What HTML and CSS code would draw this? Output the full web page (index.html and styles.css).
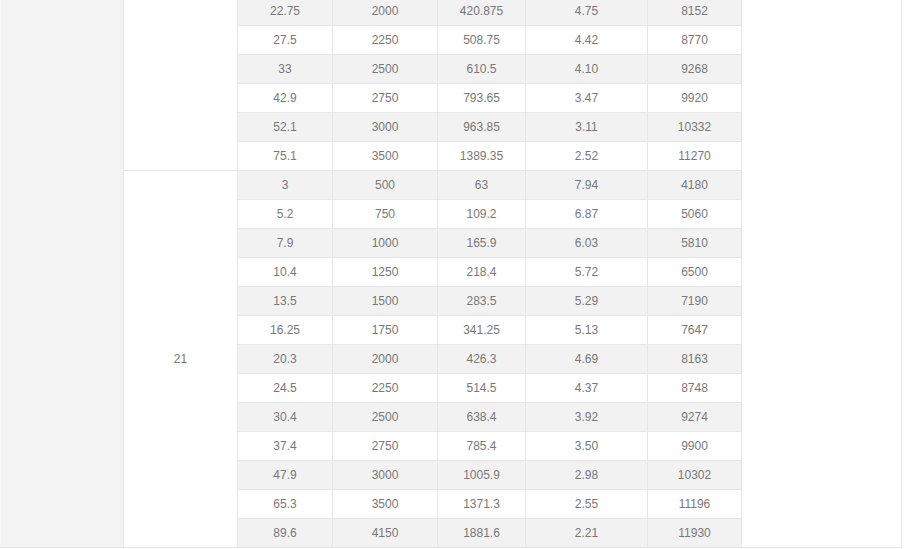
FILE: index.html
```html
<!DOCTYPE html>
<html>
<head>
<meta charset="utf-8">
<link rel="stylesheet" href="styles.css">
</head>
<body>
<table class="spec">
  <colgroup>
    <col class="c1"><col class="c2"><col class="c3"><col class="c4"><col class="c5"><col class="c6"><col class="c7"><col class="c8">
  </colgroup>
  <tbody>
    <tr class="g"><td class="side gray" rowspan="19"></td><td class="side white" rowspan="6"></td><td>22.75</td><td>2000</td><td>420.875</td><td>4.75</td><td>8152</td><td class="side white" rowspan="19"></td></tr>
    <tr><td>27.5</td><td>2250</td><td>508.75</td><td>4.42</td><td>8770</td></tr>
    <tr class="g"><td>33</td><td>2500</td><td>610.5</td><td>4.10</td><td>9268</td></tr>
    <tr><td>42.9</td><td>2750</td><td>793.65</td><td>3.47</td><td>9920</td></tr>
    <tr class="g"><td>52.1</td><td>3000</td><td>963.85</td><td>3.11</td><td>10332</td></tr>
    <tr><td>75.1</td><td>3500</td><td>1389.35</td><td>2.52</td><td>11270</td></tr>
    <tr class="g"><td class="side white" rowspan="13">21</td><td>3</td><td>500</td><td>63</td><td>7.94</td><td>4180</td></tr>
    <tr><td>5.2</td><td>750</td><td>109.2</td><td>6.87</td><td>5060</td></tr>
    <tr class="g"><td>7.9</td><td>1000</td><td>165.9</td><td>6.03</td><td>5810</td></tr>
    <tr><td>10.4</td><td>1250</td><td>218.4</td><td>5.72</td><td>6500</td></tr>
    <tr class="g"><td>13.5</td><td>1500</td><td>283.5</td><td>5.29</td><td>7190</td></tr>
    <tr><td>16.25</td><td>1750</td><td>341.25</td><td>5.13</td><td>7647</td></tr>
    <tr class="g"><td>20.3</td><td>2000</td><td>426.3</td><td>4.69</td><td>8163</td></tr>
    <tr><td>24.5</td><td>2250</td><td>514.5</td><td>4.37</td><td>8748</td></tr>
    <tr class="g"><td>30.4</td><td>2500</td><td>638.4</td><td>3.92</td><td>9274</td></tr>
    <tr><td>37.4</td><td>2750</td><td>785.4</td><td>3.50</td><td>9900</td></tr>
    <tr class="g"><td>47.9</td><td>3000</td><td>1005.9</td><td>2.98</td><td>10302</td></tr>
    <tr><td>65.3</td><td>3500</td><td>1371.3</td><td>2.55</td><td>11196</td></tr>
    <tr class="g"><td>89.6</td><td>4150</td><td>1881.6</td><td>2.21</td><td>11930</td></tr>
  </tbody>
</table>
</body>
</html>
```

FILE: styles.css
```css
html, body {
  margin: 0;
  padding: 0;
  background: #ffffff;
}
body {
  font-family: "Liberation Sans", Arial, sans-serif;
  font-size: 12px;
  color: #787878;
  overflow: hidden;
}
.spec {
  border-collapse: collapse;
  table-layout: fixed;
  width: 902px;
  margin-top: -4px;
}
.c1 { width: 123px; }
.c2 { width: 114px; }
.c3 { width: 95px; }
.c4 { width: 105px; }
.c5 { width: 88px; }
.c6 { width: 122px; }
.c7 { width: 94px; }
.c8 { width: 160px; }
.spec td {
  border: 1px solid #e6e6e6;
  height: 28px;
  padding: 0;
  text-align: center;
  vertical-align: middle;
  background: #ffffff;
}
.spec tr.g td {
  background: #f2f2f2;
}
.spec tr td.side.gray {
  background: #f3f3f3;
  border-left-color: #f8f8f8;
}
.spec tr td.side.white {
  background: #ffffff;
}
```
